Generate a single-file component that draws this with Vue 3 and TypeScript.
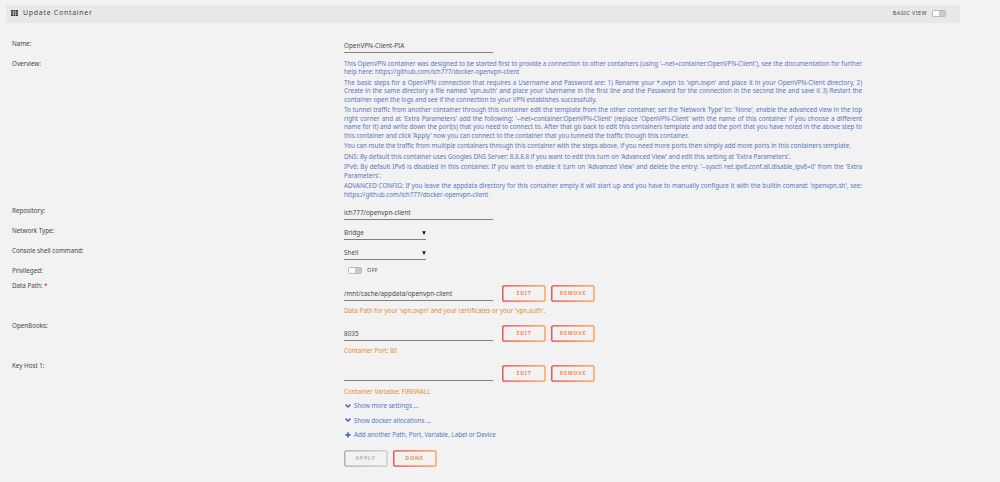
<script setup lang="ts">
interface Line { text: string; full?: boolean }

const overview: Line[][] = [
  [
    { text: "This OpenVPN container was designed to be started first to provide a connection to other containers (using '--net=container:OpenVPN-Client'), see the documentation for further", full: true },
    { text: 'help here: https://github.com/ich777/docker-openvpn-client' },
  ],
  [
    { text: "The basic steps for a OpenVPN connection that requires a Username and Password are: 1) Rename your *.ovpn to 'vpn.ovpn' and place it in your OpenVPN-Client directory, 2)", full: true },
    { text: "Create in the same directory a file named 'vpn.auth' and place your Username in the first line and the Password for the connection in the second line and save it 3) Restart the", full: true },
    { text: 'container open the logs and see if the connection to your VPN establishes successfully.' },
  ],
  [
    { text: "To tunnel traffic from another container through this container edit the template from the other container, set the 'Network Type' to: 'None', enable the advanced view in the top", full: true },
    { text: "right corner and at 'Extra Parameters' add the following: '--net=container:OpenVPN-Client' (replace 'OpenVPN-Client' with the name of this container if you choose a different", full: true },
    { text: 'name for it) and write down the port(s) that you need to connect to. After that go back to edit this containers template and add the port that you have noted in the above step to', full: true },
    { text: "this container and click 'Apply' now you can connect to the container that you tunneld the traffic though this container." },
  ],
  [{ text: 'You can route the traffic from multiple containers through this container with the steps above, if you need more ports then simply add more ports in this containers template.' }],
  [{ text: "DNS: By default this container uses Googles DNS Server: 8.8.8.8 if you want to edit this turn on 'Advanced View' and edit this setting at 'Extra Parameters'." }],
  [
    { text: "IPv6: By default IPv6 is disabled in this container. If you want to enable it turn on 'Advanced View' and delete the entry: '--sysctl net.ipv6.conf.all.disable_ipv6=0' from the 'Extra", full: true },
    { text: "Parameters'." },
  ],
  [
    { text: "ADVANCED CONFIG: If you leave the appdata directory for this container empty it will start up and you have to manually configure it with the builtin comand: 'openvpn.sh', see:", full: true },
    { text: 'https://github.com/ich777/docker-openvpn-client' },
  ],
]

const mappings = [
  { label: 'Data Path:', required: true, value: '/mnt/cache/appdata/openvpn-client', note: "Data Path for your 'vpn.ovpn' and your certificates or your 'vpn.auth'." },
  { label: 'OpenBooks:', required: false, value: '8035', note: 'Container Port: 80' },
  { label: 'Key Host 1:', required: false, value: '', note: 'Container Variable: FIREWALL' },
]

const links = [
  { icon: 'chevron', text: 'Show more settings ...' },
  { icon: 'chevron', text: 'Show docker allocations ...' },
  { icon: 'plus', text: 'Add another Path, Port, Variable, Label or Device' },
]
</script>

<template>
  <div class="page">
    <svg class="defs" width="0" height="0">
      <linearGradient id="warm" x1="0" y1="0" x2="1" y2="0"><stop offset="0" stop-color="#e6403f" /><stop offset="1" stop-color="#fb9a4b" /></linearGradient>
      <linearGradient id="grey" x1="0" y1="0" x2="1" y2="0"><stop offset="0" stop-color="#a6a6a6" /><stop offset="1" stop-color="#c9c9c9" /></linearGradient>
    </svg>
    <header class="bar">
      <svg class="grid-icon" viewBox="0 0 7 6"><path d="M0 0h2v1.7H0zM2.5 0h2v1.7h-2zM5 0h2v1.7H5zM0 2.15h2v1.7H0zM2.5 2.15h2v1.7h-2zM5 2.15h2v1.7H5zM0 4.3h2V6H0zM2.5 4.3h2V6h-2zM5 4.3h2V6H5z" /></svg>
      <h1>Update Container</h1>
      <span class="view">BASIC VIEW</span>
      <i class="switch"></i>
    </header>

    <main>
      <div class="row">
        <label>Name:</label>
        <div class="field">OpenVPN-Client-PIA</div>
      </div>
      <div class="row overview-row">
        <label>Overview:</label>
        <div class="overview">
          <p v-for="(para, i) in overview" :key="i">
            <span v-for="line in para" :key="line.text" :class="{ full: line.full }">{{ line.text }}</span>
          </p>
        </div>
      </div>
      <div class="row">
        <label>Repository:</label>
        <div class="field">ich777/openvpn-client</div>
      </div>
      <div class="row">
        <label>Network Type:</label>
        <div class="field select">Bridge<svg viewBox="0 0 4 4"><path d="M.2 .3h3.6L2 4z" /></svg></div>
      </div>
      <div class="row">
        <label>Console shell command:</label>
        <div class="field select">Shell<svg viewBox="0 0 4 4"><path d="M.2 .3h3.6L2 4z" /></svg></div>
      </div>
      <div class="row privileged">
        <label>Privileged:</label>
        <div class="toggle"><i class="switch"></i><span>OFF</span></div>
      </div>
      <div v-for="m in mappings" :key="m.label" class="row mapping">
        <label>{{ m.label }} <b v-if="m.required">*</b></label>
        <div>
          <div class="controls">
            <div class="field">{{ m.value }}</div>
            <button v-for="action in ['EDIT', 'REMOVE']" :key="action" class="btn">
              <svg viewBox="0 0 44 17"><rect x=".8" y=".8" width="42.2" height="15.4" rx="1.2" /></svg>
              <span>{{ action }}</span>
            </button>
          </div>
          <div class="note">{{ m.note }}</div>
        </div>
      </div>

      <div class="links">
        <a v-for="l in links" :key="l.text">
          <svg viewBox="0 0 6 6">
            <path v-if="l.icon === 'chevron'" d="M.5 1.7 3 4 5.5 1.7" />
            <path v-else d="M3 .3v5.2M.4 2.9h5.2" />
          </svg>
          <span>{{ l.text }}</span>
        </a>
      </div>
      <div class="actions">
        <button class="btn disabled">
          <svg viewBox="0 0 44 17"><rect x=".8" y=".8" width="42.2" height="15.4" rx="1.2" /></svg>
          <span>APPLY</span>
        </button>
        <button class="btn">
          <svg viewBox="0 0 44 17"><rect x=".8" y=".8" width="42.2" height="15.4" rx="1.2" /></svg>
          <span>DONE</span>
        </button>
      </div>
    </main>
  </div>
</template>

<style>
body { margin: 0; background: #f2f2f2; }
</style>

<style scoped>
.page {
  box-sizing: border-box;
  width: 1000px;
  height: 482px;
  padding-top: 5px;
  overflow: hidden;
  background: #f2f2f2;
  color: #484848;
  font-family: "Noto Sans", "Open Sans", sans-serif;
  font-size: 6.3px;
  letter-spacing: -0.035px;
  line-height: 8.45px;
}
.defs { display: block; }
.bar {
  box-sizing: border-box;
  display: flex;
  align-items: center;
  width: 954px;
  height: 18px;
  margin-left: 6px;
  padding: 0 14px 1px 5px;
  background: #e8e8e8;
}
.grid-icon { width: 7px; height: 6px; margin-bottom: 1px; fill: #383838; }
h1 { margin: 0 auto 0 5px; font-size: 7px; font-weight: 400; letter-spacing: 0.7px; }
.view { margin-right: 5px; font-size: 5.5px; letter-spacing: 0.4px; }
.bar .switch { margin-bottom: 1px; }
.switch {
  box-sizing: border-box;
  width: 14px;
  height: 7px;
  border: 1px solid #b9b9b9;
  border-radius: 1.5px;
  background: linear-gradient(90deg, #fbfbfb 50%, #cacaca 50%);
}
main { padding: 15px 0 0 12px; }
.row { display: grid; grid-template-columns: 332px auto; height: 20.05px; justify-content: start; }
label { padding-top: 2px; white-space: nowrap; }
label b { color: #e22828; font-weight: 400; }
.field {
  box-sizing: border-box;
  width: 149px;
  height: 15px;
  padding-top: 4px;
  border-bottom: 1px solid #808080;
  letter-spacing: 0.04px;
  white-space: nowrap;
}
.select { display: flex; justify-content: space-between; width: 82px; }
.select svg { width: 4px; height: 4px; margin-top: 2.3px; fill: #111; }
.overview-row { height: 147px; }
.overview { width: 518px; padding-top: 2px; color: #5b76bf; }
.overview p { margin: 0 0 2.05px; }
.overview span { display: block; white-space: nowrap; }
.overview .full { white-space: normal; height: 8.45px; text-align: justify; text-align-last: justify; }
.privileged { height: 14.6px; }
.toggle { display: flex; align-items: center; height: 9px; padding: 0.5px 0 0 4px; font-size: 5.5px; letter-spacing: 0.35px; }
.toggle span { margin: 0.5px 0 0 5px; }
.mapping { height: 40.2px; }
.controls { display: flex; height: 24px; }
.controls .field { height: 21px; padding-top: 9.8px; margin-right: 9px; }
.note { padding-top: 3.4px; color: #e68a35; white-space: nowrap; }
.btn {
  display: grid;
  width: 44px;
  height: 17px;
  padding: 0;
  border: 0;
  background: none;
  color: #fb8b50;
  font: 700 5.3px/17px "Noto Sans", sans-serif;
  letter-spacing: 0.75px;
}
.btn svg, .btn span { grid-area: 1 / 1; }
.btn svg { width: 44px; height: 17px; fill: none; stroke: url(#warm); stroke-width: 1.3; }
.controls .btn { margin: 5.3px 5px 0 0; }
.disabled { color: #b5b5b5; }
.disabled svg { stroke: url(#grey); }
.links { margin: -1px 0 0 333px; color: #5b76bf; }
.links a { display: flex; align-items: center; height: 14.4px; white-space: nowrap; }
.links svg { width: 6px; height: 6px; margin: 0 3px 1px 0; fill: none; stroke: #4868bd; stroke-width: 1.6; }
.actions { display: flex; gap: 5px; margin: 7px 0 0 331.5px; }
</style>
